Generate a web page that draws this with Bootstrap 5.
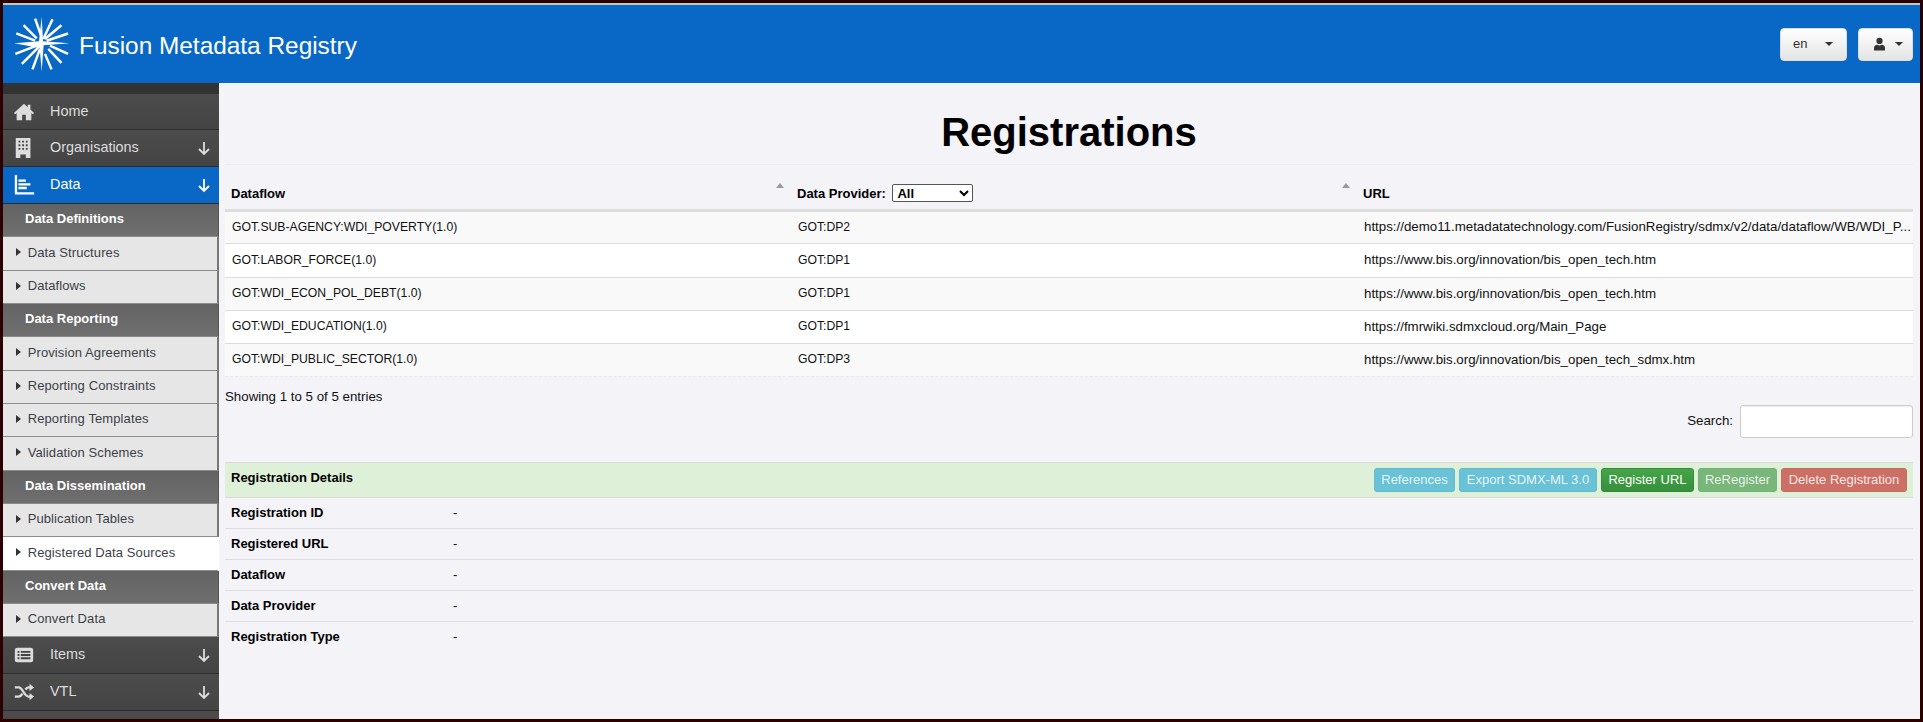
<!DOCTYPE html>
<html lang="en">
<head>
<meta charset="utf-8">
<title>Registrations</title>
<link href="https://cdn.jsdelivr.net/npm/bootstrap@5.3.0/dist/css/bootstrap.min.css" rel="stylesheet">
<style>
html,body{height:100%;overflow:hidden}
body{background:#2a0000;font-family:"Liberation Sans",Arial,sans-serif;font-size:13px;color:#111;padding:3px}
.app-frame{height:716px;background:#f3f3f8;border-top:2px solid #c4c9c0}
.top-bar{height:78px;background:#0968c6;color:#fff;padding:0 7px 0 11px}
.brand-star{width:56px;height:56px;flex:none}
.brand-name{font-size:24.4px;margin-left:9px;line-height:1;margin-top:5px}
.hdr-btn{height:33px;font-size:13px;padding:0 10px 0 12px;color:#333;background:linear-gradient(#fff,#e4e4e4);border:1px solid #ddd;border-radius:4px;display:flex;align-items:center}
.hdr-lang{width:67px;margin-right:3px}
.hdr-lang.dropdown-toggle::after{margin-left:18px;color:#333;border-top-width:4.5px;border-left-width:4.5px;border-right-width:4.5px}
.hdr-user{width:55px;padding:0 9px 0 15px}
.hdr-user.dropdown-toggle::after{margin-left:10px;border-top-width:4.5px;border-left-width:4.5px;border-right-width:4.5px}
.body-row{height:636px;overflow:hidden}
.side-nav{width:216px;flex:none;background:#333;padding-top:11px;overflow:hidden}
.top-item{height:37px;background:linear-gradient(#4c4c4c,#444);border-bottom:1px solid #2c2c2c;color:#ddd;font-size:14.4px;padding:0 8px 0 10px}
.top-item.first-item{height:36px}
.top-item.on{background:#0968c6;color:#fff}
.top-ico{width:22px;height:22px;flex:none;margin-right:15px}
.top-label{flex:1}
.down-arrow{width:14px;height:16px;flex:none}
.sub-head{height:33.33px;background:linear-gradient(#636363,#6f6f6f);border-bottom:1px solid #8a8a8a;border-right:1px solid #555;color:#fff;font-weight:700;font-size:13px;padding:0 0 2px 22px}
.sub-item{height:33.33px;background:#e6e6e6;border-bottom:1px solid #8c8c8c;border-right:2px solid #777;color:#3c3f48;font-size:13px;padding:0 0 2px 13px;letter-spacing:.1px}
.sub-item.on{background:#fff;border-right-color:#fff}
.tri{width:0;height:0;border-left:5px solid #333;border-top:4.5px solid transparent;border-bottom:4.5px solid transparent;margin-right:6.7px;flex:none}
.work-pane{flex:1;min-width:0;padding:0 7px 0 6px}
.page-title{height:82px;margin:0;padding-top:14px;font-size:40px;font-weight:700;line-height:70px;text-align:center;color:#000;border-bottom:1px solid #ebebf0}
.reg-table{table-layout:fixed;width:100%;margin:5px 0 0;--bs-table-bg:transparent;color:#111;font-size:12.2px}
.reg-table th{height:40px;padding:9px 6px 0;font-size:13px;font-weight:700;border-bottom:3px solid #dedede;vertical-align:middle;position:relative;color:#000;background:transparent;box-shadow:none}
.reg-table tbody td{height:33px;padding:0 7px;vertical-align:middle;border-bottom:1px solid #ddd;white-space:nowrap;background:#fff;box-shadow:none}
.reg-table tbody tr:nth-child(2) td{height:34px}
.reg-table tbody tr:nth-child(odd) td{background:#f9f9f9}
.reg-table tbody tr:last-child td{border-bottom:1px dashed #e9e9f6}
.reg-table tbody td.url-cell{font-size:13.3px;padding-right:0;letter-spacing:0;overflow:hidden}
.col-a{width:566px}.col-b{width:566px}
.sort-up{position:absolute;right:7px;top:13px;width:0;height:0;border-left:4.5px solid transparent;border-right:4.5px solid transparent;border-bottom:5px solid #999}
.prov-select{width:81px;height:18px;font-size:13px;font-weight:700;margin-left:3px;padding:0;border:1px solid #555;border-radius:2px;background:#fff;vertical-align:baseline;font-family:"Liberation Sans",Arial,sans-serif}
.info-line{height:28px;font-size:13.3px;margin-top:6px}
.search-wrap{height:33px;margin-top:-6px}
.search-wrap label{margin-right:7px;font-size:13.3px}
.search-box{width:173px;height:33px;border:1px solid #ccc;border-radius:3px;background:#fff;box-shadow:inset 0 1px 1px rgba(0,0,0,.08)}
.detail-bar{height:36px;margin-top:24px;background:#dff0d8;border-top:1px solid #d8ded5;border-bottom:1px solid #d8ded5;padding:0 6px;font-weight:700;font-size:13px;color:#000}
.detail-title{align-self:flex-start;padding-top:5px}
.act-btn{height:24px;padding:0;font-size:13px;line-height:22px;color:rgba(255,255,255,.85);border:1px solid transparent;border-radius:3px;white-space:nowrap}
.act-info{background:#69c2d6;border-color:#62bbd0}
.act-go{background:linear-gradient(#45a548,#378f3c);border-color:#338b38;color:#fff}
.act-soft{background:#79b67a;border-color:#74b176}
.act-del{background:#cc7066;border-color:#c76a60}
.wd-ref{width:81px}.wd-exp{width:138px}.wd-reg{width:93px}.wd-rer{width:79px}.wd-del{width:126px}
.detail-row{height:31px;border-bottom:1px solid #dcdce2;padding:0 6px;font-size:13px}
.detail-row.final-row{border-bottom:0}
.detail-key{width:222px;font-weight:700;color:#000;flex:none}
</style>
</head>
<body>
<div class="app-frame d-flex flex-column">
  <header class="top-bar d-flex align-items-center">
    <svg class="brand-star" viewBox="42 50 168 170" stroke="#fff" stroke-width="7.500" fill="#fff" aria-hidden="true">
      <g>
        <line x1="105" y1="58" x2="124" y2="112"/><line x1="158" y1="60" x2="130" y2="120"/><line x1="185" y1="78" x2="135" y2="120"/><line x1="205" y1="103" x2="140" y2="125"/><line x1="205" y1="165" x2="150" y2="140"/><line x1="185" y1="192" x2="145" y2="150"/><line x1="155" y1="212" x2="135" y2="165"/><line x1="97" y1="212" x2="120" y2="150"/><line x1="65" y1="195" x2="115" y2="145"/><line x1="45" y1="165" x2="110" y2="140"/><line x1="48" y1="103" x2="105" y2="125"/><line x1="70" y1="78" x2="110" y2="118"/>
      </g>
      <path stroke="none" d="M125 52L129 127L210 133L131 139L125 218L119 147L42 133L117 127Z"/>
    </svg>
    <span class="brand-name">Fusion Metadata Registry</span>
    <div class="ms-auto d-flex gap-2">
      <button type="button" class="btn hdr-btn hdr-lang dropdown-toggle">en</button>
      <button type="button" class="btn hdr-btn hdr-user dropdown-toggle" aria-label="User">
        <svg width="12" height="14" viewBox="0 0 12 14" fill="#333" aria-hidden="true"><circle cx="6" cy="3.600" r="3.400"/><path d="M0 14v-2.600C0 9 2 7.800 3.500 7.800c.8.5 1.600.7 2.500.7s1.700-.2 2.500-.7C10 7.800 12 9 12 11.400V14Z"/></svg>
      </button>
    </div>
  </header>
  <div class="body-row d-flex">
    <nav class="side-nav">
      <div class="top-item first-item d-flex align-items-center">
        <svg class="top-ico" viewBox="0 0 24 24" fill="#ddd"><path d="M12 3L1 13l1.300 1.400L4 13v8h6v-6h4v6h6v-8l1.700 1.400L23 13l-4-3.600V4h-3v2.700Z"/></svg>
        <span class="top-label">Home</span>
      </div>
      <div class="top-item d-flex align-items-center">
        <svg class="top-ico" viewBox="0 0 24 24"><path fill="#ddd" d="M3 1h16v22h-5v-4H8v4H3Z"/><path fill="#444" d="M6 4h2v2H6zm4 0h2v2h-2zm4 0h2v2h-2zM6 8h2v2H6zm4 0h2v2h-2zm4 0h2v2h-2zM6 12h2v2H6zm4 0h2v2h-2zm4 0h2v2h-2z"/></svg>
        <span class="top-label">Organisations</span>
        <svg class="down-arrow" viewBox="0 0 14 16" fill="none" stroke="#ddd" stroke-width="1.800"><path d="M7 2v12M2 9l5 5 5-5"/></svg>
      </div>
      <div class="top-item on d-flex align-items-center">
        <svg class="top-ico" viewBox="0 0 24 24" fill="#fff"><path d="M2 1h2.500v19H23v2.400H2Z"/><path d="M6 6h8v2.500H6zM6 10h13v2.500H6zM6 14h9v2.500H6z"/></svg>
        <span class="top-label">Data</span>
        <svg class="down-arrow" viewBox="0 0 14 16" fill="none" stroke="#fff" stroke-width="1.800"><path d="M7 2v12M2 9l5 5 5-5"/></svg>
      </div>
      <div class="sub-head d-flex align-items-center">Data Definitions</div>
      <div class="sub-item d-flex align-items-center"><i class="tri"></i>Data Structures</div>
      <div class="sub-item d-flex align-items-center"><i class="tri"></i>Dataflows</div>
      <div class="sub-head d-flex align-items-center">Data Reporting</div>
      <div class="sub-item d-flex align-items-center"><i class="tri"></i>Provision Agreements</div>
      <div class="sub-item d-flex align-items-center"><i class="tri"></i>Reporting Constraints</div>
      <div class="sub-item d-flex align-items-center"><i class="tri"></i>Reporting Templates</div>
      <div class="sub-item d-flex align-items-center"><i class="tri"></i>Validation Schemes</div>
      <div class="sub-head d-flex align-items-center">Data Dissemination</div>
      <div class="sub-item d-flex align-items-center"><i class="tri"></i>Publication Tables</div>
      <div class="sub-item on d-flex align-items-center"><i class="tri"></i>Registered Data Sources</div>
      <div class="sub-head d-flex align-items-center">Convert Data</div>
      <div class="sub-item d-flex align-items-center"><i class="tri"></i>Convert Data</div>
      <div class="top-item d-flex align-items-center">
        <svg class="top-ico" viewBox="0 0 24 24"><rect x="2" y="4" width="20" height="16" rx="2.500" fill="#ddd"/><path fill="#444" d="M5 7.500h2v2H5zM5 11h2v2H5zM5 14.500h2v2H5zM8.500 7.500H19v2H8.500zM8.500 11H19v2H8.500zM8.500 14.500H19v2H8.500z"/></svg>
        <span class="top-label">Items</span>
        <svg class="down-arrow" viewBox="0 0 14 16" fill="none" stroke="#ddd" stroke-width="1.800"><path d="M7 2v12M2 9l5 5 5-5"/></svg>
      </div>
      <div class="top-item d-flex align-items-center">
        <svg class="top-ico" viewBox="0 0 24 24" fill="none" stroke="#ddd" stroke-width="2.600"><path d="M2 7h4c5 0 6 10 11 10h2M2 17h4c2 0 3.200-1.500 4.300-3.300M13.500 9.300C14.500 8 15.500 7 17 7h2"/><path fill="#ddd" stroke="none" d="M18 3l5 4-5 4zM18 13l5 4-5 4z"/></svg>
        <span class="top-label">VTL</span>
        <svg class="down-arrow" viewBox="0 0 14 16" fill="none" stroke="#ddd" stroke-width="1.800"><path d="M7 2v12M2 9l5 5 5-5"/></svg>
      </div>
      <div class="top-item d-flex align-items-center">
        <svg class="top-ico" viewBox="0 0 24 24" fill="#ddd"><path d="M12 1l3 5H9z"/></svg>
      </div>
    </nav>
    <main class="work-pane">
      <h1 class="page-title">Registrations</h1>
      <table class="table reg-table">
        <colgroup><col class="col-a"><col class="col-b"><col></colgroup>
        <thead>
          <tr>
            <th>Dataflow<span class="sort-up"></span></th>
            <th>Data Provider: <select class="prov-select" aria-label="Data Provider"><option>All</option></select><span class="sort-up"></span></th>
            <th>URL</th>
          </tr>
        </thead>
        <tbody>
          <tr><td>GOT.SUB-AGENCY:WDI_POVERTY(1.0)</td><td>GOT:DP2</td><td class="url-cell">https://demo11.metadatatechnology.com/FusionRegistry/sdmx/v2/data/dataflow/WB/WDI_P...</td></tr>
          <tr><td>GOT:LABOR_FORCE(1.0)</td><td>GOT:DP1</td><td class="url-cell">https://www.bis.org/innovation/bis_open_tech.htm</td></tr>
          <tr><td>GOT:WDI_ECON_POL_DEBT(1.0)</td><td>GOT:DP1</td><td class="url-cell">https://www.bis.org/innovation/bis_open_tech.htm</td></tr>
          <tr><td>GOT:WDI_EDUCATION(1.0)</td><td>GOT:DP1</td><td class="url-cell">https://fmrwiki.sdmxcloud.org/Main_Page</td></tr>
          <tr><td>GOT:WDI_PUBLIC_SECTOR(1.0)</td><td>GOT:DP3</td><td class="url-cell">https://www.bis.org/innovation/bis_open_tech_sdmx.htm</td></tr>
        </tbody>
      </table>
      <div class="info-line d-flex align-items-center">Showing 1 to 5 of 5 entries</div>
      <div class="search-wrap d-flex justify-content-end align-items-center">
        <label for="reg-search">Search:</label>
        <input id="reg-search" class="search-box" type="text">
      </div>
      <section class="detail-bar d-flex align-items-center justify-content-between">
        <span class="detail-title">Registration Details</span>
        <div class="d-flex gap-1">
          <button type="button" class="btn act-btn act-info wd-ref">References</button>
          <button type="button" class="btn act-btn act-info wd-exp">Export SDMX-ML 3.0</button>
          <button type="button" class="btn act-btn act-go wd-reg">Register URL</button>
          <button type="button" class="btn act-btn act-soft wd-rer">ReRegister</button>
          <button type="button" class="btn act-btn act-del wd-del">Delete Registration</button>
        </div>
      </section>
      <div class="detail-row d-flex align-items-center"><span class="detail-key">Registration ID</span><span>-</span></div>
      <div class="detail-row d-flex align-items-center"><span class="detail-key">Registered URL</span><span>-</span></div>
      <div class="detail-row d-flex align-items-center"><span class="detail-key">Dataflow</span><span>-</span></div>
      <div class="detail-row d-flex align-items-center"><span class="detail-key">Data Provider</span><span>-</span></div>
      <div class="detail-row final-row d-flex align-items-center"><span class="detail-key">Registration Type</span><span>-</span></div>
    </main>
  </div>
</div>
<script src="https://cdn.jsdelivr.net/npm/bootstrap@5.3.0/dist/js/bootstrap.bundle.min.js"></script>
</body>
</html>
